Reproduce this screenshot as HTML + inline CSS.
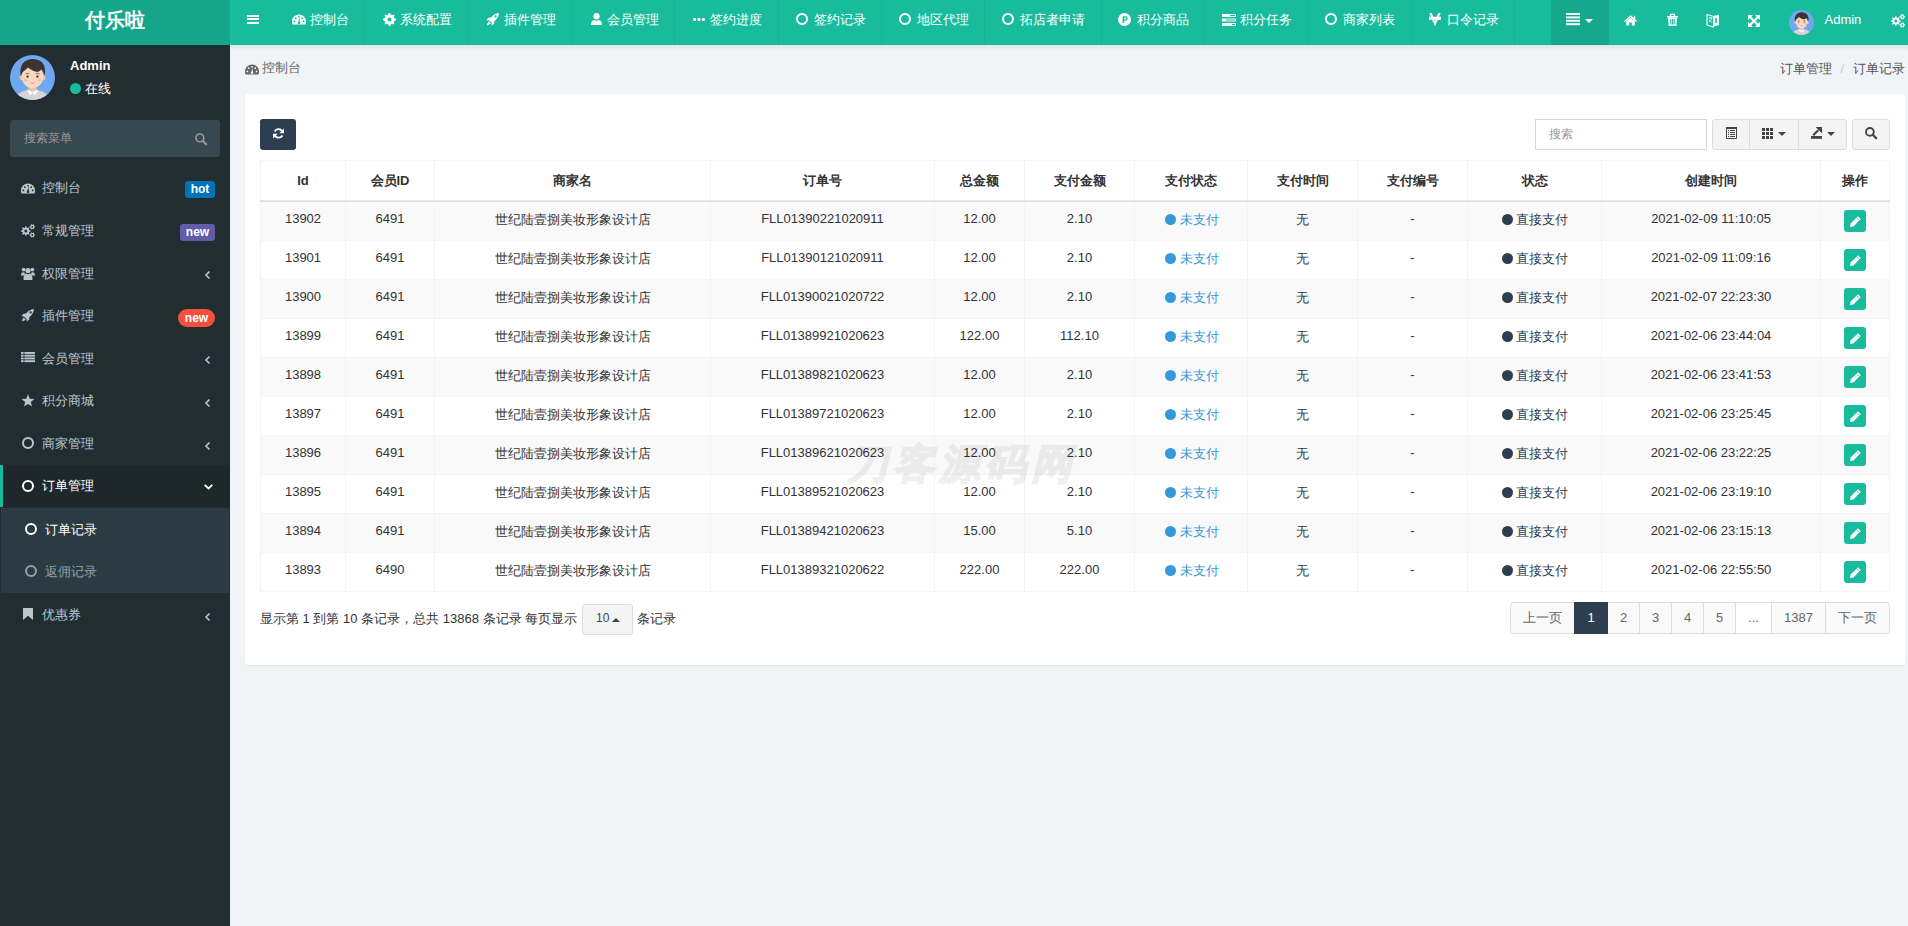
<!DOCTYPE html>
<html><head><meta charset="utf-8">
<style>
*{box-sizing:border-box;margin:0;padding:0}
html,body{width:1908px;height:926px;overflow:hidden;background:#f1f4f6}
body{font-family:"Liberation Sans",sans-serif;font-size:13px;line-height:1.42857143;color:#333;position:relative}
.abs{position:absolute}
.t{white-space:nowrap}
svg{display:block;overflow:visible}
.badge{height:17px;color:#fff;font-weight:bold;font-size:12px;line-height:17px;text-align:center;border-radius:3px}
</style></head><body>
<div class="abs" style="left:0;top:0;width:230px;height:45px;background:#15a589"></div>
<div class="abs t" style="left:0.0px;top:6px;width:230px;text-align:center;line-height:28px;font-size:20px;font-weight:bold;color:#fff">付乐啦</div>
<div class="abs" style="left:230px;top:0;width:1690px;height:45px;background:#18bc9c"></div>
<svg class="abs" style="left:247px;top:15px;" width="12" height="9" viewBox="0 0 12 9"><rect x="0" y="0" width="12" height="2" fill="#fff"/><rect x="0" y="3" width="12" height="2" fill="#fff"/><rect x="0" y="7" width="12" height="2" fill="#fff"/></svg>
<div class="abs" style="left:364px;top:0;width:1px;height:45px;background:rgba(0,0,0,0.05)"></div>
<svg class="abs" style="left:291.6px;top:14.2px;" width="14" height="10.5" viewBox="0 0 14 10.5"><path d="M0.6 10.4 C0 9.5 0 8.5 0 7.4 A7 7 0 0 1 14 7.4 C14 8.5 14 9.5 13.4 10.4 Z" fill="#fff"/><circle cx="2.40" cy="7.40" r="0.9" fill="#18bc9c"/><circle cx="3.75" cy="4.15" r="0.9" fill="#18bc9c"/><circle cx="7.00" cy="2.80" r="0.9" fill="#18bc9c"/><circle cx="10.25" cy="4.15" r="0.9" fill="#18bc9c"/><circle cx="11.60" cy="7.40" r="0.9" fill="#18bc9c"/><path d="M6.3 8.6 L7.4 3.6 L7.9 8.8 Z" fill="#18bc9c"/><circle cx="7" cy="8.7" r="1.3" fill="#18bc9c"/></svg>
<div class="abs t" style="left:310.3px;top:9.5px;line-height:19px;color:#fff">控制台</div>
<div class="abs" style="left:468px;top:0;width:1px;height:45px;background:rgba(0,0,0,0.05)"></div>
<svg class="abs" style="left:383px;top:13px;" width="13" height="13" viewBox="0 0 13 13"><path d="M12.97 5.86 L12.97 7.14 L11.19 7.92 L10.82 8.81 L11.52 10.62 L10.62 11.52 L8.81 10.82 L7.92 11.19 L7.14 12.97 L5.86 12.97 L5.08 11.19 L4.19 10.82 L2.38 11.52 L1.48 10.62 L2.18 8.81 L1.81 7.92 L0.03 7.14 L0.03 5.86 L1.81 5.08 L2.18 4.19 L1.48 2.38 L2.38 1.48 L4.19 2.18 L5.08 1.81 L5.86 0.03 L7.14 0.03 L7.92 1.81 L8.81 2.18 L10.62 1.48 L11.52 2.38 L10.82 4.19 L11.19 5.08Z" fill="#fff"/><circle cx="6.5" cy="6.5" r="2.0" fill="#18bc9c"/></svg>
<div class="abs t" style="left:400.3px;top:9.5px;line-height:19px;color:#fff">系统配置</div>
<div class="abs" style="left:571px;top:0;width:1px;height:45px;background:rgba(0,0,0,0.05)"></div>
<svg class="abs" style="left:486px;top:13px;" width="13" height="13" viewBox="0 0 13 13"><path d="M13 0 C9.5 0.2 7 2 5 4.6 L2.4 4.8 L0.4 7.2 L3 7.4 L5.6 10 L5.8 12.6 L8.2 10.6 L8.4 8 C11 6 12.8 3.5 13 0 Z M2.8 8.6 C1.6 9.6 1.2 11.2 1 12.4 C2.2 12.2 3.8 11.8 4.8 10.6 Z" fill="#fff"/><circle cx="9.6" cy="3.4" r="1.1" fill="#18bc9c"/></svg>
<div class="abs t" style="left:504.3px;top:9.5px;line-height:19px;color:#fff">插件管理</div>
<div class="abs" style="left:674px;top:0;width:1px;height:45px;background:rgba(0,0,0,0.05)"></div>
<svg class="abs" style="left:591px;top:13px;" width="11" height="12" viewBox="0 0 11 12"><ellipse cx="5.5" cy="3.3" rx="3.1" ry="3.3" fill="#fff"/><path d="M0 12 C0 9 1.2 7.3 3 7 C4.4 8 6.6 8 8 7 C9.8 7.3 11 9 11 12 Z" fill="#fff"/></svg>
<div class="abs t" style="left:607.3px;top:9.5px;line-height:19px;color:#fff">会员管理</div>
<div class="abs" style="left:778px;top:0;width:1px;height:45px;background:rgba(0,0,0,0.05)"></div>
<svg class="abs" style="left:693px;top:17.5px;" width="12" height="3" viewBox="0 0 12 3"><rect x="0" y="0" width="3" height="3" rx="1" fill="#fff"/><rect x="4.5" y="0" width="3" height="3" rx="1" fill="#fff"/><rect x="9" y="0" width="3" height="3" rx="1" fill="#fff"/></svg>
<div class="abs t" style="left:710.3px;top:9.5px;line-height:19px;color:#fff">签约进度</div>
<div class="abs" style="left:881px;top:0;width:1px;height:45px;background:rgba(0,0,0,0.05)"></div>
<svg class="abs" style="left:796px;top:13px;" width="12" height="12" viewBox="0 0 12 12"><circle cx="6" cy="6" r="5.0" fill="none" stroke="#fff" stroke-width="2"/></svg>
<div class="abs t" style="left:814.3px;top:9.5px;line-height:19px;color:#fff">签约记录</div>
<div class="abs" style="left:984px;top:0;width:1px;height:45px;background:rgba(0,0,0,0.05)"></div>
<svg class="abs" style="left:899px;top:13px;" width="12" height="12" viewBox="0 0 12 12"><circle cx="6" cy="6" r="5.0" fill="none" stroke="#fff" stroke-width="2"/></svg>
<div class="abs t" style="left:917.3px;top:9.5px;line-height:19px;color:#fff">地区代理</div>
<div class="abs" style="left:1101px;top:0;width:1px;height:45px;background:rgba(0,0,0,0.05)"></div>
<svg class="abs" style="left:1002px;top:13px;" width="12" height="12" viewBox="0 0 12 12"><circle cx="6" cy="6" r="5.0" fill="none" stroke="#fff" stroke-width="2"/></svg>
<div class="abs t" style="left:1020.3px;top:9.5px;line-height:19px;color:#fff">拓店者申请</div>
<div class="abs" style="left:1204px;top:0;width:1px;height:45px;background:rgba(0,0,0,0.05)"></div>
<svg class="abs" style="left:1118px;top:12.5px;" width="13" height="13" viewBox="0 0 13 13"><circle cx="6.5" cy="6.5" r="6.5" fill="#fff"/><path d="M4.6 3.2 H7.4 A2.3 2.3 0 0 1 7.4 7.8 H6.2 V10 H4.6 Z M6.2 4.6 V6.4 H7.3 A0.9 0.9 0 0 0 7.3 4.6 Z" fill="#18bc9c"/></svg>
<div class="abs t" style="left:1137.3px;top:9.5px;line-height:19px;color:#fff">积分商品</div>
<div class="abs" style="left:1307px;top:0;width:1px;height:45px;background:rgba(0,0,0,0.05)"></div>
<svg class="abs" style="left:1222px;top:14px;" width="14" height="12" viewBox="0 0 14 12"><rect x="0" y="0" width="14" height="3" fill="#fff"/><rect x="0" y="4.5" width="14" height="3" fill="#fff"/><rect x="0" y="9" width="14" height="3" fill="#fff"/><rect x="8" y="1" width="5" height="1" fill="#18bc9c"/><rect x="4" y="5.5" width="9" height="1" fill="#18bc9c"/><rect x="10" y="10" width="3" height="1" fill="#18bc9c"/></svg>
<div class="abs t" style="left:1240.3px;top:9.5px;line-height:19px;color:#fff">积分任务</div>
<div class="abs" style="left:1411px;top:0;width:1px;height:45px;background:rgba(0,0,0,0.05)"></div>
<svg class="abs" style="left:1325px;top:13px;" width="12" height="12" viewBox="0 0 12 12"><circle cx="6" cy="6" r="5.0" fill="none" stroke="#fff" stroke-width="2"/></svg>
<div class="abs t" style="left:1343.3px;top:9.5px;line-height:19px;color:#fff">商家列表</div>
<div class="abs" style="left:1514px;top:0;width:1px;height:45px;background:rgba(0,0,0,0.05)"></div>
<svg class="abs" style="left:1429px;top:12.7px;" width="12" height="13.2" viewBox="0 0 12 13.2"><path d="M0.3 0 H2.8 L6 8.6 L9.2 0 H11.7 L6 13.2 Z" fill="#fff"/><rect x="0" y="3.8" width="12" height="3" fill="#fff"/></svg>
<div class="abs t" style="left:1447.3px;top:9.5px;line-height:19px;color:#fff">口令记录</div>
<div class="abs" style="left:1551px;top:0;width:58px;height:45px;background:rgba(0,0,0,0.1)"></div>
<svg class="abs" style="left:1566px;top:13px;" width="14" height="12" viewBox="0 0 14 12"><rect x="0" y="0" width="14" height="2" fill="#fff"/><rect x="0" y="3.4" width="14" height="2" fill="#fff"/><rect x="0" y="6.8" width="14" height="2" fill="#fff"/><rect x="0" y="10.2" width="14" height="2" fill="#fff"/></svg>
<svg class="abs" style="left:1585px;top:19px;" width="8" height="4" viewBox="0 0 8 4"><path d="M0 0 H8 L4.0 4 Z" fill="#fff"/></svg>
<svg class="abs" style="left:1624px;top:14.5px;" width="13" height="10.5" viewBox="0 0 13 10.5"><path d="M6.5 0.3 L13 6 L12 7 L6.5 2.2 L1 7 L0 6 Z" fill="#fff"/><path d="M2.2 6.4 L6.5 2.8 L10.8 6.4 V10.5 H7.8 V7.6 H5.2 V10.5 H2.2 Z" fill="#fff"/><rect x="9.6" y="0.8" width="1.6" height="3.4" fill="#fff"/></svg>
<svg class="abs" style="left:1667px;top:14px;" width="11" height="12" viewBox="0 0 11 12"><rect x="0" y="2" width="11" height="1.6" fill="#fff"/><path d="M3.5 2 V0.3 H7.5 V2" fill="none" stroke="#fff" stroke-width="1.3"/><path d="M1 3.6 H10 L9.4 12 H1.6 Z" fill="#fff"/><rect x="3.2" y="5" width="1" height="5.5" fill="#18bc9c"/><rect x="5" y="5" width="1" height="5.5" fill="#18bc9c"/><rect x="6.8" y="5" width="1" height="5.5" fill="#18bc9c"/></svg>
<svg class="abs" style="left:1707px;top:14px;" width="12" height="13" viewBox="0 0 12 13"><path d="M0 0.5 L6.5 2.5 V13 L0 11 Z" fill="none" stroke="#fff" stroke-width="1.1"/><path d="M6 2.2 L12 0.5 V11 L6 12.8 Z" fill="#fff"/><path d="M8 9 L9 3.8 L10.2 9 M8.4 7.3 H9.8" fill="none" stroke="#18bc9c" stroke-width="0.9"/><path d="M1.5 4 H5 M3.2 3 V4 M2 8 C3.5 7 4.5 5.5 4.6 4 M2.4 5.6 C3 7 4 8 5 8.4" fill="none" stroke="#fff" stroke-width="0.8"/></svg>
<svg class="abs" style="left:1748px;top:14.5px;" width="12" height="12" viewBox="0 0 12 12"><path d="M0 0 H5 L0 5 Z M12 0 V5 L7 0 Z M0 12 V7 L5 12 Z M12 12 H7 L12 7 Z" fill="#fff"/><path d="M1.5 1.5 L10.5 10.5 M10.5 1.5 L1.5 10.5" stroke="#fff" stroke-width="2.2"/></svg>
<svg class="abs" style="left:1789px;top:10px;" width="25" height="25" viewBox="0 0 100 100"><defs><clipPath id="av25"><circle cx="50" cy="50" r="50"/></clipPath></defs>
<g clip-path="url(#av25)"><rect width="100" height="100" fill="#6ea8f0"/>
<path d="M12 100 C14 84 30 77 50 77 C70 77 86 84 88 100 Z" fill="#d9d4cf"/>
<rect x="41" y="62" width="18" height="17" fill="#eec3a6"/>
<path d="M38 76 L50 84 L44 90 Z M62 76 L50 84 L56 90 Z" fill="#ffffff"/>
<ellipse cx="26" cy="50" rx="4.5" ry="6" fill="#f2c8ad"/><ellipse cx="74" cy="50" rx="4.5" ry="6" fill="#f2c8ad"/>
<ellipse cx="50" cy="48" rx="24" ry="26" fill="#f7d8c2"/>
<path d="M24 48 C19 22 33 8 52 9 C70 10 82 22 77 46 C75 40 73 35 70 32 C66 36 62 38 58 37 C50 36 44 31 40 28 C36 33 30 36 27 40 Z" fill="#3b3431"/>
<path d="M34 42 Q38.5 39.5 43 42 M57 42 Q61.5 39.5 66 42" fill="none" stroke="#5a4636" stroke-width="1.6"/>
<ellipse cx="39" cy="48" rx="2.4" ry="2.8" fill="#4a3a30"/><ellipse cx="61" cy="48" rx="2.4" ry="2.8" fill="#4a3a30"/>
<ellipse cx="34" cy="56" rx="4.5" ry="2.6" fill="#f5b9a8"/><ellipse cx="66" cy="56" rx="4.5" ry="2.6" fill="#f5b9a8"/>
<path d="M46 62 Q50 64.5 54 62" fill="none" stroke="#d98a7a" stroke-width="1.8"/></g></svg>
<div class="abs t" style="left:1824.5px;top:10px;line-height:19px;color:#fff;font-size:13px">Admin</div>
<svg class="abs" style="left:1891px;top:14px;" width="14" height="14" viewBox="0 0 14 14"><path d="M9.58 6.53 L9.58 7.47 L8.05 7.99 L7.80 8.60 L8.51 10.05 L7.85 10.71 L6.40 10.00 L5.79 10.25 L5.27 11.78 L4.33 11.78 L3.81 10.25 L3.20 10.00 L1.75 10.71 L1.09 10.05 L1.80 8.60 L1.55 7.99 L0.02 7.47 L0.02 6.53 L1.55 6.01 L1.80 5.40 L1.09 3.95 L1.75 3.29 L3.20 4.00 L3.81 3.75 L4.33 2.22 L5.27 2.22 L5.79 3.75 L6.40 4.00 L7.85 3.29 L8.51 3.95 L7.80 5.40 L8.05 6.01Z" fill="#fff"/><circle cx="4.8" cy="7.0" r="1.5" fill="#18bc9c"/><path d="M14.08 2.43 L14.08 3.17 L13.15 3.57 L12.89 4.02 L13.00 5.02 L12.37 5.39 L11.56 4.78 L11.04 4.78 L10.23 5.39 L9.60 5.02 L9.71 4.02 L9.45 3.57 L8.52 3.17 L8.52 2.43 L9.45 2.03 L9.71 1.58 L9.60 0.58 L10.23 0.21 L11.04 0.82 L11.56 0.82 L12.37 0.21 L13.00 0.58 L12.89 1.58 L13.15 2.03Z" fill="#fff"/><circle cx="11.3" cy="2.8" r="0.9" fill="#18bc9c"/><path d="M14.08 10.63 L14.08 11.37 L13.15 11.77 L12.89 12.22 L13.00 13.22 L12.37 13.59 L11.56 12.98 L11.04 12.98 L10.23 13.59 L9.60 13.22 L9.71 12.22 L9.45 11.77 L8.52 11.37 L8.52 10.63 L9.45 10.23 L9.71 9.78 L9.60 8.78 L10.23 8.41 L11.04 9.02 L11.56 9.02 L12.37 8.41 L13.00 8.78 L12.89 9.78 L13.15 10.23Z" fill="#fff"/><circle cx="11.3" cy="11.0" r="0.9" fill="#18bc9c"/></svg>
<div class="abs" style="left:0;top:45px;width:230px;height:881px;background:#222d32"></div>
<svg class="abs" style="left:10px;top:55px;" width="45" height="45" viewBox="0 0 100 100"><defs><clipPath id="av45"><circle cx="50" cy="50" r="50"/></clipPath></defs>
<g clip-path="url(#av45)"><rect width="100" height="100" fill="#6ea8f0"/>
<path d="M12 100 C14 84 30 77 50 77 C70 77 86 84 88 100 Z" fill="#d9d4cf"/>
<rect x="41" y="62" width="18" height="17" fill="#eec3a6"/>
<path d="M38 76 L50 84 L44 90 Z M62 76 L50 84 L56 90 Z" fill="#ffffff"/>
<ellipse cx="26" cy="50" rx="4.5" ry="6" fill="#f2c8ad"/><ellipse cx="74" cy="50" rx="4.5" ry="6" fill="#f2c8ad"/>
<ellipse cx="50" cy="48" rx="24" ry="26" fill="#f7d8c2"/>
<path d="M24 48 C19 22 33 8 52 9 C70 10 82 22 77 46 C75 40 73 35 70 32 C66 36 62 38 58 37 C50 36 44 31 40 28 C36 33 30 36 27 40 Z" fill="#3b3431"/>
<path d="M34 42 Q38.5 39.5 43 42 M57 42 Q61.5 39.5 66 42" fill="none" stroke="#5a4636" stroke-width="1.6"/>
<ellipse cx="39" cy="48" rx="2.4" ry="2.8" fill="#4a3a30"/><ellipse cx="61" cy="48" rx="2.4" ry="2.8" fill="#4a3a30"/>
<ellipse cx="34" cy="56" rx="4.5" ry="2.6" fill="#f5b9a8"/><ellipse cx="66" cy="56" rx="4.5" ry="2.6" fill="#f5b9a8"/>
<path d="M46 62 Q50 64.5 54 62" fill="none" stroke="#d98a7a" stroke-width="1.8"/></g></svg>
<div class="abs t" style="left:70px;top:56px;line-height:19px;color:#fff;font-size:13px;font-weight:bold">Admin</div>
<svg class="abs" style="left:70px;top:83px;" width="11" height="11" viewBox="0 0 11 11"><circle cx="5.5" cy="5.5" r="5.5" fill="#18bc9c"/></svg>
<div class="abs t" style="left:85px;top:78.5px;line-height:19px;color:#fff">在线</div>
<div class="abs" style="left:10px;top:120px;width:210px;height:37px;background:#374850;border-radius:3px"></div>
<div class="abs t" style="left:24px;top:129px;line-height:19px;color:#999;font-size:12px">搜索菜单</div>
<svg class="abs" style="left:195px;top:133px;" width="12" height="12" viewBox="0 0 12 12"><circle cx="4.9" cy="4.9" r="3.9" fill="none" stroke="#999" stroke-width="1.6"/><path d="M7.7 7.7 L11.2 11.2" stroke="#999" stroke-width="2.0" stroke-linecap="round"/></svg>
<svg class="abs" style="left:21px;top:182.79999999999998px;" width="14" height="10.5" viewBox="0 0 14 10.5"><path d="M0.6 10.4 C0 9.5 0 8.5 0 7.4 A7 7 0 0 1 14 7.4 C14 8.5 14 9.5 13.4 10.4 Z" fill="#b8c7ce"/><circle cx="2.40" cy="7.40" r="0.9" fill="#222d32"/><circle cx="3.75" cy="4.15" r="0.9" fill="#222d32"/><circle cx="7.00" cy="2.80" r="0.9" fill="#222d32"/><circle cx="10.25" cy="4.15" r="0.9" fill="#222d32"/><circle cx="11.60" cy="7.40" r="0.9" fill="#222d32"/><path d="M6.3 8.6 L7.4 3.6 L7.9 8.8 Z" fill="#222d32"/><circle cx="7" cy="8.7" r="1.3" fill="#222d32"/></svg>
<div class="abs t" style="left:42px;top:178.4px;line-height:19px;color:#b8c7ce">控制台</div>
<div class="abs badge" style="left:185px;top:181.00px;width:30px;background:#0073b7">hot</div>
<svg class="abs" style="left:21px;top:224.17px;" width="14" height="14" viewBox="0 0 14 14"><path d="M9.58 6.53 L9.58 7.47 L8.05 7.99 L7.80 8.60 L8.51 10.05 L7.85 10.71 L6.40 10.00 L5.79 10.25 L5.27 11.78 L4.33 11.78 L3.81 10.25 L3.20 10.00 L1.75 10.71 L1.09 10.05 L1.80 8.60 L1.55 7.99 L0.02 7.47 L0.02 6.53 L1.55 6.01 L1.80 5.40 L1.09 3.95 L1.75 3.29 L3.20 4.00 L3.81 3.75 L4.33 2.22 L5.27 2.22 L5.79 3.75 L6.40 4.00 L7.85 3.29 L8.51 3.95 L7.80 5.40 L8.05 6.01Z" fill="#b8c7ce"/><circle cx="4.8" cy="7.0" r="1.5" fill="#222d32"/><path d="M14.08 2.43 L14.08 3.17 L13.15 3.57 L12.89 4.02 L13.00 5.02 L12.37 5.39 L11.56 4.78 L11.04 4.78 L10.23 5.39 L9.60 5.02 L9.71 4.02 L9.45 3.57 L8.52 3.17 L8.52 2.43 L9.45 2.03 L9.71 1.58 L9.60 0.58 L10.23 0.21 L11.04 0.82 L11.56 0.82 L12.37 0.21 L13.00 0.58 L12.89 1.58 L13.15 2.03Z" fill="#b8c7ce"/><circle cx="11.3" cy="2.8" r="0.9" fill="#222d32"/><path d="M14.08 10.63 L14.08 11.37 L13.15 11.77 L12.89 12.22 L13.00 13.22 L12.37 13.59 L11.56 12.98 L11.04 12.98 L10.23 13.59 L9.60 13.22 L9.71 12.22 L9.45 11.77 L8.52 11.37 L8.52 10.63 L9.45 10.23 L9.71 9.78 L9.60 8.78 L10.23 8.41 L11.04 9.02 L11.56 9.02 L12.37 8.41 L13.00 8.78 L12.89 9.78 L13.15 10.23Z" fill="#b8c7ce"/><circle cx="11.3" cy="11.0" r="0.9" fill="#222d32"/></svg>
<div class="abs t" style="left:42px;top:220.97px;line-height:19px;color:#b8c7ce">常规管理</div>
<div class="abs badge" style="left:180px;top:223.57px;width:35px;background:#605ca8">new</div>
<svg class="abs" style="left:21px;top:266.74px;" width="14" height="13" viewBox="0 0 14 13"><circle cx="2.6" cy="2.6" r="1.9" fill="#b8c7ce"/><circle cx="11.4" cy="2.6" r="1.9" fill="#b8c7ce"/><circle cx="7" cy="3.5" r="2.6" fill="#b8c7ce"/><path d="M0 8.5 C0 6 1 5.2 2.4 5.2 C3 5.2 3.6 5.6 4 6 L3 8.5 Z M14 8.5 C14 6 13 5.2 11.6 5.2 C11 5.2 10.4 5.6 10 6 L11 8.5 Z" fill="#b8c7ce"/><path d="M2.6 13 V10.5 C2.6 8 4 6.8 5 6.6 C6.2 7.4 7.8 7.4 9 6.6 C10 6.8 11.4 8 11.4 10.5 V13 Z" fill="#b8c7ce"/></svg>
<div class="abs t" style="left:42px;top:263.54px;line-height:19px;color:#b8c7ce">权限管理</div>
<svg class="abs" style="left:205px;top:271.24px;" width="6" height="8" viewBox="0 0 6 8"><path d="M4.5 0.5 L1 4 L4.5 7.5" fill="none" stroke="#b8c7ce" stroke-width="1.6"/></svg>
<svg class="abs" style="left:21px;top:309.31px;" width="13" height="13" viewBox="0 0 13 13"><path d="M13 0 C9.5 0.2 7 2 5 4.6 L2.4 4.8 L0.4 7.2 L3 7.4 L5.6 10 L5.8 12.6 L8.2 10.6 L8.4 8 C11 6 12.8 3.5 13 0 Z M2.8 8.6 C1.6 9.6 1.2 11.2 1 12.4 C2.2 12.2 3.8 11.8 4.8 10.6 Z" fill="#b8c7ce"/><circle cx="9.6" cy="3.4" r="1.1" fill="#222d32"/></svg>
<div class="abs t" style="left:42px;top:306.11px;line-height:19px;color:#b8c7ce">插件管理</div>
<div class="abs badge" style="left:178px;top:308.91px;width:37px;height:18px;line-height:18px;background:#f5503f;border-radius:9px">new</div>
<svg class="abs" style="left:21px;top:352.08px;" width="14" height="10.2" viewBox="0 0 14 10.2"><rect x="0" y="0" width="2.6" height="1.9" fill="#b8c7ce"/><rect x="3.4" y="0" width="10.6" height="1.9" fill="#b8c7ce"/><rect x="0" y="2.75" width="2.6" height="1.9" fill="#b8c7ce"/><rect x="3.4" y="2.75" width="10.6" height="1.9" fill="#b8c7ce"/><rect x="0" y="5.5" width="2.6" height="1.9" fill="#b8c7ce"/><rect x="3.4" y="5.5" width="10.6" height="1.9" fill="#b8c7ce"/><rect x="0" y="8.25" width="2.6" height="1.9" fill="#b8c7ce"/><rect x="3.4" y="8.25" width="10.6" height="1.9" fill="#b8c7ce"/></svg>
<div class="abs t" style="left:42px;top:348.68px;line-height:19px;color:#b8c7ce">会员管理</div>
<svg class="abs" style="left:205px;top:356.38px;" width="6" height="8" viewBox="0 0 6 8"><path d="M4.5 0.5 L1 4 L4.5 7.5" fill="none" stroke="#b8c7ce" stroke-width="1.6"/></svg>
<svg class="abs" style="left:21px;top:393.95px;" width="14" height="14" viewBox="0 0 14 14"><path d="M7.00 0.20 L8.70 4.65 L13.47 4.90 L9.76 7.90 L11.00 12.50 L7.00 9.90 L3.00 12.50 L4.24 7.90 L0.53 4.90 L5.30 4.65Z" fill="#b8c7ce"/></svg>
<div class="abs t" style="left:42px;top:391.25px;line-height:19px;color:#b8c7ce">积分商城</div>
<svg class="abs" style="left:205px;top:398.95px;" width="6" height="8" viewBox="0 0 6 8"><path d="M4.5 0.5 L1 4 L4.5 7.5" fill="none" stroke="#b8c7ce" stroke-width="1.6"/></svg>
<svg class="abs" style="left:22px;top:437.02px;" width="12" height="12" viewBox="0 0 12 12"><circle cx="6" cy="6" r="5.0" fill="none" stroke="#b8c7ce" stroke-width="2"/></svg>
<div class="abs t" style="left:42px;top:433.82px;line-height:19px;color:#b8c7ce">商家管理</div>
<svg class="abs" style="left:205px;top:441.52px;" width="6" height="8" viewBox="0 0 6 8"><path d="M4.5 0.5 L1 4 L4.5 7.5" fill="none" stroke="#b8c7ce" stroke-width="1.6"/></svg>
<div class="abs" style="left:0;top:464.59px;width:230px;height:42.57px;background:#1e282c"></div>
<div class="abs" style="left:0;top:464.59px;width:3px;height:42.57px;background:#18bc9c"></div>
<svg class="abs" style="left:22px;top:479.59000000000003px;" width="12" height="12" viewBox="0 0 12 12"><circle cx="6" cy="6" r="5.0" fill="none" stroke="#fff" stroke-width="2"/></svg>
<div class="abs t" style="left:42px;top:476.39000000000004px;line-height:19px;color:#fff">订单管理</div>
<svg class="abs" style="left:203.5px;top:484.09000000000003px;" width="9" height="5.5" viewBox="0 0 9 5.5"><path d="M0.7 0.8 L4.5 4.4 L8.3 0.8" fill="none" stroke="#fff" stroke-width="1.8"/></svg>
<div class="abs" style="left:1px;top:508.00px;width:228px;height:85px;background:#2c3b41"></div>
<svg class="abs" style="left:25px;top:522.6px;" width="12" height="12" viewBox="0 0 12 12"><circle cx="6" cy="6" r="5.0" fill="none" stroke="#fff" stroke-width="2"/></svg>
<div class="abs t" style="left:45px;top:519.8px;line-height:19px;color:#fff">订单记录</div>
<svg class="abs" style="left:25px;top:565.1700000000001px;" width="12" height="12" viewBox="0 0 12 12"><circle cx="6" cy="6" r="5.0" fill="none" stroke="#8aa4af" stroke-width="2"/></svg>
<div class="abs t" style="left:45px;top:562.37px;line-height:19px;color:#8aa4af">返佣记录</div>
<svg class="abs" style="left:23px;top:608px;" width="10" height="12" viewBox="0 0 10 12"><path d="M0 0 H10 V12 L5 7.8 L0 12 Z" fill="#b8c7ce"/></svg>
<div class="abs t" style="left:42px;top:604.8px;line-height:19px;color:#b8c7ce">优惠券</div>
<svg class="abs" style="left:205px;top:612.5px;" width="6" height="8" viewBox="0 0 6 8"><path d="M4.5 0.5 L1 4 L4.5 7.5" fill="none" stroke="#b8c7ce" stroke-width="1.6"/></svg>
<div class="abs" style="left:230px;top:45px;width:1690px;height:6px;background:linear-gradient(rgba(0,0,0,0.06),rgba(0,0,0,0))"></div>
<svg class="abs" style="left:245px;top:64px;" width="14" height="10.5" viewBox="0 0 14 10.5"><path d="M0.6 10.4 C0 9.5 0 8.5 0 7.4 A7 7 0 0 1 14 7.4 C14 8.5 14 9.5 13.4 10.4 Z" fill="#666"/><circle cx="2.40" cy="7.40" r="0.9" fill="#f1f4f6"/><circle cx="3.75" cy="4.15" r="0.9" fill="#f1f4f6"/><circle cx="7.00" cy="2.80" r="0.9" fill="#f1f4f6"/><circle cx="10.25" cy="4.15" r="0.9" fill="#f1f4f6"/><circle cx="11.60" cy="7.40" r="0.9" fill="#f1f4f6"/><path d="M6.3 8.6 L7.4 3.6 L7.9 8.8 Z" fill="#f1f4f6"/><circle cx="7" cy="8.7" r="1.3" fill="#f1f4f6"/></svg>
<div class="abs t" style="left:261.5px;top:58px;line-height:19px;color:#666">控制台</div>
<div class="abs t" style="left:1780px;top:58.5px;line-height:19px;color:#555">订单管理</div>
<div class="abs t" style="left:1840.5px;top:58.5px;line-height:19px;color:#ccc">/</div>
<div class="abs t" style="left:1853px;top:58.5px;line-height:19px;color:#555">订单记录</div>
<div class="abs" style="left:245px;top:94px;width:1660px;height:571px;background:#fff;border-radius:3px;box-shadow:0 1px 1px rgba(0,0,0,0.06)"></div>
<div class="abs" style="left:260px;top:119px;width:36px;height:31px;background:#2c3e50;border-radius:3px"></div>
<svg class="abs" style="left:273px;top:128.3px;" width="11" height="10.5" viewBox="0 0 11.6 11"><path d="M10.2 4.2 A4.8 4.8 0 0 0 1.6 3.6" fill="none" stroke="#fff" stroke-width="1.9"/><path d="M11.6 0.4 V5.4 H6.6 Z" fill="#fff"/><path d="M1.4 7.0 A4.8 4.8 0 0 0 10 7.8" fill="none" stroke="#fff" stroke-width="1.9"/><path d="M0 11 V6 H5 Z" fill="#fff"/></svg>
<div class="abs" style="left:1535px;top:119px;width:172px;height:31px;border:1px solid #d2d6de;background:#fff"></div>
<div class="abs t" style="left:1548.5px;top:124.5px;line-height:19px;color:#999;font-size:12px">搜索</div>
<div class="abs" style="left:1712px;top:119px;width:135px;height:31px;border:1px solid #ddd;background:#f4f4f4;border-radius:3px"></div>
<div class="abs" style="left:1749px;top:119px;width:1px;height:31px;background:#ddd"></div>
<div class="abs" style="left:1798px;top:119px;width:1px;height:31px;background:#ddd"></div>
<svg class="abs" style="left:1726px;top:127px;" width="11" height="12" viewBox="0 0 11 12"><path d="M0.5 0.5 H10.5 V11.5 H0.5 Z" fill="none" stroke="#444" stroke-width="1"/><rect x="0" y="0" width="11" height="2" fill="#444"/><rect x="2" y="3" width="1" height="1" fill="#444"/><rect x="4" y="3" width="5" height="1" fill="#444"/><rect x="2" y="5" width="1" height="1" fill="#444"/><rect x="4" y="5" width="5" height="1" fill="#444"/><rect x="2" y="7" width="1" height="1" fill="#444"/><rect x="4" y="7" width="5" height="1" fill="#444"/><rect x="2" y="9" width="1" height="1" fill="#444"/><rect x="4" y="9" width="5" height="1" fill="#444"/></svg>
<svg class="abs" style="left:1762px;top:128px;" width="11" height="11" viewBox="0 0 11 11"><rect x="0" y="0" width="3" height="3" fill="#444"/><rect x="0" y="4" width="3" height="3" fill="#444"/><rect x="0" y="8" width="3" height="3" fill="#444"/><rect x="4" y="0" width="3" height="3" fill="#444"/><rect x="4" y="4" width="3" height="3" fill="#444"/><rect x="4" y="8" width="3" height="3" fill="#444"/><rect x="8" y="0" width="3" height="3" fill="#444"/><rect x="8" y="4" width="3" height="3" fill="#444"/><rect x="8" y="8" width="3" height="3" fill="#444"/></svg>
<svg class="abs" style="left:1778px;top:132px;" width="8" height="4" viewBox="0 0 8 4"><path d="M0 0 H8 L4.0 4 Z" fill="#444"/></svg>
<svg class="abs" style="left:1811px;top:127px;" width="11" height="12" viewBox="0 0 11 12"><rect x="0" y="9" width="11" height="2.8" fill="#444"/><path d="M2.2 8.2 L7.2 3.2" stroke="#444" stroke-width="2.2"/><path d="M4.6 0 H11 V6.4 Z" fill="#444"/></svg>
<svg class="abs" style="left:1826.5px;top:132px;" width="8" height="4" viewBox="0 0 8 4"><path d="M0 0 H8 L4.0 4 Z" fill="#444"/></svg>
<div class="abs" style="left:1852px;top:119px;width:38px;height:31px;border:1px solid #ddd;background:#f4f4f4;border-radius:3px"></div>
<svg class="abs" style="left:1865px;top:127px;" width="13" height="13" viewBox="0 0 13 13"><circle cx="4.9" cy="4.9" r="3.9" fill="none" stroke="#444" stroke-width="1.9"/><path d="M7.7 7.7 L11.2 11.2" stroke="#444" stroke-width="2.3" stroke-linecap="round"/></svg>
<div class="abs" style="left:261px;top:202px;width:1628px;height:38px;background:#f9f9f9"></div>
<div class="abs" style="left:260px;top:240px;width:1630px;height:1px;background:#f4f4f4"></div>
<div class="abs" style="left:261px;top:241px;width:1628px;height:38px;background:#fff"></div>
<div class="abs" style="left:260px;top:279px;width:1630px;height:1px;background:#f4f4f4"></div>
<div class="abs" style="left:261px;top:280px;width:1628px;height:38px;background:#f9f9f9"></div>
<div class="abs" style="left:260px;top:318px;width:1630px;height:1px;background:#f4f4f4"></div>
<div class="abs" style="left:261px;top:319px;width:1628px;height:38px;background:#fff"></div>
<div class="abs" style="left:260px;top:357px;width:1630px;height:1px;background:#f4f4f4"></div>
<div class="abs" style="left:261px;top:358px;width:1628px;height:38px;background:#f9f9f9"></div>
<div class="abs" style="left:260px;top:396px;width:1630px;height:1px;background:#f4f4f4"></div>
<div class="abs" style="left:261px;top:397px;width:1628px;height:38px;background:#fff"></div>
<div class="abs" style="left:260px;top:435px;width:1630px;height:1px;background:#f4f4f4"></div>
<div class="abs" style="left:261px;top:436px;width:1628px;height:38px;background:#f9f9f9"></div>
<div class="abs" style="left:260px;top:474px;width:1630px;height:1px;background:#f4f4f4"></div>
<div class="abs" style="left:261px;top:475px;width:1628px;height:38px;background:#fff"></div>
<div class="abs" style="left:260px;top:513px;width:1630px;height:1px;background:#f4f4f4"></div>
<div class="abs" style="left:261px;top:514px;width:1628px;height:38px;background:#f9f9f9"></div>
<div class="abs" style="left:260px;top:552px;width:1630px;height:1px;background:#f4f4f4"></div>
<div class="abs" style="left:261px;top:553px;width:1628px;height:38px;background:#fff"></div>
<div class="abs" style="left:260px;top:591px;width:1630px;height:1px;background:#f4f4f4"></div>
<div class="abs" style="left:260px;top:160px;width:1630px;height:1px;background:#f4f4f4"></div>
<div class="abs" style="left:260px;top:200px;width:1630px;height:1px;background:#e8e8e8"></div>
<div class="abs" style="left:260px;top:201px;width:1630px;height:1px;background:#ddd"></div>
<div class="abs" style="left:260px;top:591px;width:1630px;height:1px;background:#f4f4f4"></div>
<div class="abs" style="left:260px;top:160px;width:1px;height:40px;background:#f4f4f4"></div>
<div class="abs" style="left:260px;top:202px;width:1px;height:390px;background:#f4f4f4"></div>
<div class="abs" style="left:345px;top:160px;width:1px;height:40px;background:#f4f4f4"></div>
<div class="abs" style="left:345px;top:202px;width:1px;height:390px;background:#f4f4f4"></div>
<div class="abs" style="left:434px;top:160px;width:1px;height:40px;background:#f4f4f4"></div>
<div class="abs" style="left:434px;top:202px;width:1px;height:390px;background:#f4f4f4"></div>
<div class="abs" style="left:710px;top:160px;width:1px;height:40px;background:#f4f4f4"></div>
<div class="abs" style="left:710px;top:202px;width:1px;height:390px;background:#f4f4f4"></div>
<div class="abs" style="left:934px;top:160px;width:1px;height:40px;background:#f4f4f4"></div>
<div class="abs" style="left:934px;top:202px;width:1px;height:390px;background:#f4f4f4"></div>
<div class="abs" style="left:1024px;top:160px;width:1px;height:40px;background:#f4f4f4"></div>
<div class="abs" style="left:1024px;top:202px;width:1px;height:390px;background:#f4f4f4"></div>
<div class="abs" style="left:1134px;top:160px;width:1px;height:40px;background:#f4f4f4"></div>
<div class="abs" style="left:1134px;top:202px;width:1px;height:390px;background:#f4f4f4"></div>
<div class="abs" style="left:1247px;top:160px;width:1px;height:40px;background:#f4f4f4"></div>
<div class="abs" style="left:1247px;top:202px;width:1px;height:390px;background:#f4f4f4"></div>
<div class="abs" style="left:1357px;top:160px;width:1px;height:40px;background:#f4f4f4"></div>
<div class="abs" style="left:1357px;top:202px;width:1px;height:390px;background:#f4f4f4"></div>
<div class="abs" style="left:1467px;top:160px;width:1px;height:40px;background:#f4f4f4"></div>
<div class="abs" style="left:1467px;top:202px;width:1px;height:390px;background:#f4f4f4"></div>
<div class="abs" style="left:1601px;top:160px;width:1px;height:40px;background:#f4f4f4"></div>
<div class="abs" style="left:1601px;top:202px;width:1px;height:390px;background:#f4f4f4"></div>
<div class="abs" style="left:1820px;top:160px;width:1px;height:40px;background:#f4f4f4"></div>
<div class="abs" style="left:1820px;top:202px;width:1px;height:390px;background:#f4f4f4"></div>
<div class="abs" style="left:1889px;top:160px;width:1px;height:40px;background:#f4f4f4"></div>
<div class="abs" style="left:1889px;top:202px;width:1px;height:390px;background:#f4f4f4"></div>
<div class="abs t" style="left:103.0px;top:171px;width:400px;text-align:center;line-height:19px;font-weight:bold;color:#333">Id</div>
<div class="abs t" style="left:190.0px;top:171px;width:400px;text-align:center;line-height:19px;font-weight:bold;color:#333">会员ID</div>
<div class="abs t" style="left:372.5px;top:171px;width:400px;text-align:center;line-height:19px;font-weight:bold;color:#333">商家名</div>
<div class="abs t" style="left:622.5px;top:171px;width:400px;text-align:center;line-height:19px;font-weight:bold;color:#333">订单号</div>
<div class="abs t" style="left:779.5px;top:171px;width:400px;text-align:center;line-height:19px;font-weight:bold;color:#333">总金额</div>
<div class="abs t" style="left:879.5px;top:171px;width:400px;text-align:center;line-height:19px;font-weight:bold;color:#333">支付金额</div>
<div class="abs t" style="left:991.0px;top:171px;width:400px;text-align:center;line-height:19px;font-weight:bold;color:#333">支付状态</div>
<div class="abs t" style="left:1102.5px;top:171px;width:400px;text-align:center;line-height:19px;font-weight:bold;color:#333">支付时间</div>
<div class="abs t" style="left:1212.5px;top:171px;width:400px;text-align:center;line-height:19px;font-weight:bold;color:#333">支付编号</div>
<div class="abs t" style="left:1334.5px;top:171px;width:400px;text-align:center;line-height:19px;font-weight:bold;color:#333">状态</div>
<div class="abs t" style="left:1511.0px;top:171px;width:400px;text-align:center;line-height:19px;font-weight:bold;color:#333">创建时间</div>
<div class="abs t" style="left:1655.0px;top:171px;width:400px;text-align:center;line-height:19px;font-weight:bold;color:#333">操作</div>
<div class="abs t" style="left:103.0px;top:209px;width:400px;text-align:center;line-height:19px;">13902</div>
<div class="abs t" style="left:190.0px;top:209px;width:400px;text-align:center;line-height:19px;">6491</div>
<div class="abs t" style="left:372.5px;top:210px;width:400px;text-align:center;line-height:19px;">世纪陆壹捌美妆形象设计店</div>
<div class="abs t" style="left:622.5px;top:209px;width:400px;text-align:center;line-height:19px;">FLL01390221020911</div>
<div class="abs t" style="left:779.5px;top:209px;width:400px;text-align:center;line-height:19px;">12.00</div>
<div class="abs t" style="left:879.5px;top:209px;width:400px;text-align:center;line-height:19px;">2.10</div>
<svg class="abs" style="left:1165px;top:214px;" width="11" height="11" viewBox="0 0 11 11"><circle cx="5.5" cy="5.5" r="5.5" fill="#3498db"/></svg>
<div class="abs t" style="left:1179.5px;top:210px;line-height:19px;color:#3498db">未支付</div>
<div class="abs t" style="left:1102.5px;top:210px;width:400px;text-align:center;line-height:19px;">无</div>
<div class="abs t" style="left:1212.5px;top:209px;width:400px;text-align:center;line-height:19px;">-</div>
<svg class="abs" style="left:1501.5px;top:214px;" width="11" height="11" viewBox="0 0 11 11"><circle cx="5.5" cy="5.5" r="5.5" fill="#2c3e50"/></svg>
<div class="abs t" style="left:1516px;top:210px;line-height:19px;color:#2c3e50">直接支付</div>
<div class="abs t" style="left:1511.0px;top:209px;width:400px;text-align:center;line-height:19px;">2021-02-09 11:10:05</div>
<div class="abs" style="left:1844px;top:210px;width:22px;height:22px;background:#18bc9c;border-radius:3px"></div>
<svg class="abs" style="left:1849.5px;top:215.5px;" width="11" height="11" viewBox="0 0 11 11"><path d="M8 0.2 L10.8 3 L3.4 10.4 L0 11 L0.6 7.6 Z" fill="#fff"/><path d="M6.6 1.6 L9.4 4.4" stroke="#18bc9c" stroke-width="0.7"/><path d="M1.6 8.6 L7.6 2.6" stroke="#a8e6d9" stroke-width="0.5"/></svg>
<div class="abs t" style="left:103.0px;top:248px;width:400px;text-align:center;line-height:19px;">13901</div>
<div class="abs t" style="left:190.0px;top:248px;width:400px;text-align:center;line-height:19px;">6491</div>
<div class="abs t" style="left:372.5px;top:249px;width:400px;text-align:center;line-height:19px;">世纪陆壹捌美妆形象设计店</div>
<div class="abs t" style="left:622.5px;top:248px;width:400px;text-align:center;line-height:19px;">FLL01390121020911</div>
<div class="abs t" style="left:779.5px;top:248px;width:400px;text-align:center;line-height:19px;">12.00</div>
<div class="abs t" style="left:879.5px;top:248px;width:400px;text-align:center;line-height:19px;">2.10</div>
<svg class="abs" style="left:1165px;top:253px;" width="11" height="11" viewBox="0 0 11 11"><circle cx="5.5" cy="5.5" r="5.5" fill="#3498db"/></svg>
<div class="abs t" style="left:1179.5px;top:249px;line-height:19px;color:#3498db">未支付</div>
<div class="abs t" style="left:1102.5px;top:249px;width:400px;text-align:center;line-height:19px;">无</div>
<div class="abs t" style="left:1212.5px;top:248px;width:400px;text-align:center;line-height:19px;">-</div>
<svg class="abs" style="left:1501.5px;top:253px;" width="11" height="11" viewBox="0 0 11 11"><circle cx="5.5" cy="5.5" r="5.5" fill="#2c3e50"/></svg>
<div class="abs t" style="left:1516px;top:249px;line-height:19px;color:#2c3e50">直接支付</div>
<div class="abs t" style="left:1511.0px;top:248px;width:400px;text-align:center;line-height:19px;">2021-02-09 11:09:16</div>
<div class="abs" style="left:1844px;top:249px;width:22px;height:22px;background:#18bc9c;border-radius:3px"></div>
<svg class="abs" style="left:1849.5px;top:254.5px;" width="11" height="11" viewBox="0 0 11 11"><path d="M8 0.2 L10.8 3 L3.4 10.4 L0 11 L0.6 7.6 Z" fill="#fff"/><path d="M6.6 1.6 L9.4 4.4" stroke="#18bc9c" stroke-width="0.7"/><path d="M1.6 8.6 L7.6 2.6" stroke="#a8e6d9" stroke-width="0.5"/></svg>
<div class="abs t" style="left:103.0px;top:287px;width:400px;text-align:center;line-height:19px;">13900</div>
<div class="abs t" style="left:190.0px;top:287px;width:400px;text-align:center;line-height:19px;">6491</div>
<div class="abs t" style="left:372.5px;top:288px;width:400px;text-align:center;line-height:19px;">世纪陆壹捌美妆形象设计店</div>
<div class="abs t" style="left:622.5px;top:287px;width:400px;text-align:center;line-height:19px;">FLL01390021020722</div>
<div class="abs t" style="left:779.5px;top:287px;width:400px;text-align:center;line-height:19px;">12.00</div>
<div class="abs t" style="left:879.5px;top:287px;width:400px;text-align:center;line-height:19px;">2.10</div>
<svg class="abs" style="left:1165px;top:292px;" width="11" height="11" viewBox="0 0 11 11"><circle cx="5.5" cy="5.5" r="5.5" fill="#3498db"/></svg>
<div class="abs t" style="left:1179.5px;top:288px;line-height:19px;color:#3498db">未支付</div>
<div class="abs t" style="left:1102.5px;top:288px;width:400px;text-align:center;line-height:19px;">无</div>
<div class="abs t" style="left:1212.5px;top:287px;width:400px;text-align:center;line-height:19px;">-</div>
<svg class="abs" style="left:1501.5px;top:292px;" width="11" height="11" viewBox="0 0 11 11"><circle cx="5.5" cy="5.5" r="5.5" fill="#2c3e50"/></svg>
<div class="abs t" style="left:1516px;top:288px;line-height:19px;color:#2c3e50">直接支付</div>
<div class="abs t" style="left:1511.0px;top:287px;width:400px;text-align:center;line-height:19px;">2021-02-07 22:23:30</div>
<div class="abs" style="left:1844px;top:288px;width:22px;height:22px;background:#18bc9c;border-radius:3px"></div>
<svg class="abs" style="left:1849.5px;top:293.5px;" width="11" height="11" viewBox="0 0 11 11"><path d="M8 0.2 L10.8 3 L3.4 10.4 L0 11 L0.6 7.6 Z" fill="#fff"/><path d="M6.6 1.6 L9.4 4.4" stroke="#18bc9c" stroke-width="0.7"/><path d="M1.6 8.6 L7.6 2.6" stroke="#a8e6d9" stroke-width="0.5"/></svg>
<div class="abs t" style="left:103.0px;top:326px;width:400px;text-align:center;line-height:19px;">13899</div>
<div class="abs t" style="left:190.0px;top:326px;width:400px;text-align:center;line-height:19px;">6491</div>
<div class="abs t" style="left:372.5px;top:327px;width:400px;text-align:center;line-height:19px;">世纪陆壹捌美妆形象设计店</div>
<div class="abs t" style="left:622.5px;top:326px;width:400px;text-align:center;line-height:19px;">FLL01389921020623</div>
<div class="abs t" style="left:779.5px;top:326px;width:400px;text-align:center;line-height:19px;">122.00</div>
<div class="abs t" style="left:879.5px;top:326px;width:400px;text-align:center;line-height:19px;">112.10</div>
<svg class="abs" style="left:1165px;top:331px;" width="11" height="11" viewBox="0 0 11 11"><circle cx="5.5" cy="5.5" r="5.5" fill="#3498db"/></svg>
<div class="abs t" style="left:1179.5px;top:327px;line-height:19px;color:#3498db">未支付</div>
<div class="abs t" style="left:1102.5px;top:327px;width:400px;text-align:center;line-height:19px;">无</div>
<div class="abs t" style="left:1212.5px;top:326px;width:400px;text-align:center;line-height:19px;">-</div>
<svg class="abs" style="left:1501.5px;top:331px;" width="11" height="11" viewBox="0 0 11 11"><circle cx="5.5" cy="5.5" r="5.5" fill="#2c3e50"/></svg>
<div class="abs t" style="left:1516px;top:327px;line-height:19px;color:#2c3e50">直接支付</div>
<div class="abs t" style="left:1511.0px;top:326px;width:400px;text-align:center;line-height:19px;">2021-02-06 23:44:04</div>
<div class="abs" style="left:1844px;top:327px;width:22px;height:22px;background:#18bc9c;border-radius:3px"></div>
<svg class="abs" style="left:1849.5px;top:332.5px;" width="11" height="11" viewBox="0 0 11 11"><path d="M8 0.2 L10.8 3 L3.4 10.4 L0 11 L0.6 7.6 Z" fill="#fff"/><path d="M6.6 1.6 L9.4 4.4" stroke="#18bc9c" stroke-width="0.7"/><path d="M1.6 8.6 L7.6 2.6" stroke="#a8e6d9" stroke-width="0.5"/></svg>
<div class="abs t" style="left:103.0px;top:365px;width:400px;text-align:center;line-height:19px;">13898</div>
<div class="abs t" style="left:190.0px;top:365px;width:400px;text-align:center;line-height:19px;">6491</div>
<div class="abs t" style="left:372.5px;top:366px;width:400px;text-align:center;line-height:19px;">世纪陆壹捌美妆形象设计店</div>
<div class="abs t" style="left:622.5px;top:365px;width:400px;text-align:center;line-height:19px;">FLL01389821020623</div>
<div class="abs t" style="left:779.5px;top:365px;width:400px;text-align:center;line-height:19px;">12.00</div>
<div class="abs t" style="left:879.5px;top:365px;width:400px;text-align:center;line-height:19px;">2.10</div>
<svg class="abs" style="left:1165px;top:370px;" width="11" height="11" viewBox="0 0 11 11"><circle cx="5.5" cy="5.5" r="5.5" fill="#3498db"/></svg>
<div class="abs t" style="left:1179.5px;top:366px;line-height:19px;color:#3498db">未支付</div>
<div class="abs t" style="left:1102.5px;top:366px;width:400px;text-align:center;line-height:19px;">无</div>
<div class="abs t" style="left:1212.5px;top:365px;width:400px;text-align:center;line-height:19px;">-</div>
<svg class="abs" style="left:1501.5px;top:370px;" width="11" height="11" viewBox="0 0 11 11"><circle cx="5.5" cy="5.5" r="5.5" fill="#2c3e50"/></svg>
<div class="abs t" style="left:1516px;top:366px;line-height:19px;color:#2c3e50">直接支付</div>
<div class="abs t" style="left:1511.0px;top:365px;width:400px;text-align:center;line-height:19px;">2021-02-06 23:41:53</div>
<div class="abs" style="left:1844px;top:366px;width:22px;height:22px;background:#18bc9c;border-radius:3px"></div>
<svg class="abs" style="left:1849.5px;top:371.5px;" width="11" height="11" viewBox="0 0 11 11"><path d="M8 0.2 L10.8 3 L3.4 10.4 L0 11 L0.6 7.6 Z" fill="#fff"/><path d="M6.6 1.6 L9.4 4.4" stroke="#18bc9c" stroke-width="0.7"/><path d="M1.6 8.6 L7.6 2.6" stroke="#a8e6d9" stroke-width="0.5"/></svg>
<div class="abs t" style="left:103.0px;top:404px;width:400px;text-align:center;line-height:19px;">13897</div>
<div class="abs t" style="left:190.0px;top:404px;width:400px;text-align:center;line-height:19px;">6491</div>
<div class="abs t" style="left:372.5px;top:405px;width:400px;text-align:center;line-height:19px;">世纪陆壹捌美妆形象设计店</div>
<div class="abs t" style="left:622.5px;top:404px;width:400px;text-align:center;line-height:19px;">FLL01389721020623</div>
<div class="abs t" style="left:779.5px;top:404px;width:400px;text-align:center;line-height:19px;">12.00</div>
<div class="abs t" style="left:879.5px;top:404px;width:400px;text-align:center;line-height:19px;">2.10</div>
<svg class="abs" style="left:1165px;top:409px;" width="11" height="11" viewBox="0 0 11 11"><circle cx="5.5" cy="5.5" r="5.5" fill="#3498db"/></svg>
<div class="abs t" style="left:1179.5px;top:405px;line-height:19px;color:#3498db">未支付</div>
<div class="abs t" style="left:1102.5px;top:405px;width:400px;text-align:center;line-height:19px;">无</div>
<div class="abs t" style="left:1212.5px;top:404px;width:400px;text-align:center;line-height:19px;">-</div>
<svg class="abs" style="left:1501.5px;top:409px;" width="11" height="11" viewBox="0 0 11 11"><circle cx="5.5" cy="5.5" r="5.5" fill="#2c3e50"/></svg>
<div class="abs t" style="left:1516px;top:405px;line-height:19px;color:#2c3e50">直接支付</div>
<div class="abs t" style="left:1511.0px;top:404px;width:400px;text-align:center;line-height:19px;">2021-02-06 23:25:45</div>
<div class="abs" style="left:1844px;top:405px;width:22px;height:22px;background:#18bc9c;border-radius:3px"></div>
<svg class="abs" style="left:1849.5px;top:410.5px;" width="11" height="11" viewBox="0 0 11 11"><path d="M8 0.2 L10.8 3 L3.4 10.4 L0 11 L0.6 7.6 Z" fill="#fff"/><path d="M6.6 1.6 L9.4 4.4" stroke="#18bc9c" stroke-width="0.7"/><path d="M1.6 8.6 L7.6 2.6" stroke="#a8e6d9" stroke-width="0.5"/></svg>
<div class="abs t" style="left:103.0px;top:443px;width:400px;text-align:center;line-height:19px;">13896</div>
<div class="abs t" style="left:190.0px;top:443px;width:400px;text-align:center;line-height:19px;">6491</div>
<div class="abs t" style="left:372.5px;top:444px;width:400px;text-align:center;line-height:19px;">世纪陆壹捌美妆形象设计店</div>
<div class="abs t" style="left:622.5px;top:443px;width:400px;text-align:center;line-height:19px;">FLL01389621020623</div>
<div class="abs t" style="left:779.5px;top:443px;width:400px;text-align:center;line-height:19px;">12.00</div>
<div class="abs t" style="left:879.5px;top:443px;width:400px;text-align:center;line-height:19px;">2.10</div>
<svg class="abs" style="left:1165px;top:448px;" width="11" height="11" viewBox="0 0 11 11"><circle cx="5.5" cy="5.5" r="5.5" fill="#3498db"/></svg>
<div class="abs t" style="left:1179.5px;top:444px;line-height:19px;color:#3498db">未支付</div>
<div class="abs t" style="left:1102.5px;top:444px;width:400px;text-align:center;line-height:19px;">无</div>
<div class="abs t" style="left:1212.5px;top:443px;width:400px;text-align:center;line-height:19px;">-</div>
<svg class="abs" style="left:1501.5px;top:448px;" width="11" height="11" viewBox="0 0 11 11"><circle cx="5.5" cy="5.5" r="5.5" fill="#2c3e50"/></svg>
<div class="abs t" style="left:1516px;top:444px;line-height:19px;color:#2c3e50">直接支付</div>
<div class="abs t" style="left:1511.0px;top:443px;width:400px;text-align:center;line-height:19px;">2021-02-06 23:22:25</div>
<div class="abs" style="left:1844px;top:444px;width:22px;height:22px;background:#18bc9c;border-radius:3px"></div>
<svg class="abs" style="left:1849.5px;top:449.5px;" width="11" height="11" viewBox="0 0 11 11"><path d="M8 0.2 L10.8 3 L3.4 10.4 L0 11 L0.6 7.6 Z" fill="#fff"/><path d="M6.6 1.6 L9.4 4.4" stroke="#18bc9c" stroke-width="0.7"/><path d="M1.6 8.6 L7.6 2.6" stroke="#a8e6d9" stroke-width="0.5"/></svg>
<div class="abs t" style="left:103.0px;top:482px;width:400px;text-align:center;line-height:19px;">13895</div>
<div class="abs t" style="left:190.0px;top:482px;width:400px;text-align:center;line-height:19px;">6491</div>
<div class="abs t" style="left:372.5px;top:483px;width:400px;text-align:center;line-height:19px;">世纪陆壹捌美妆形象设计店</div>
<div class="abs t" style="left:622.5px;top:482px;width:400px;text-align:center;line-height:19px;">FLL01389521020623</div>
<div class="abs t" style="left:779.5px;top:482px;width:400px;text-align:center;line-height:19px;">12.00</div>
<div class="abs t" style="left:879.5px;top:482px;width:400px;text-align:center;line-height:19px;">2.10</div>
<svg class="abs" style="left:1165px;top:487px;" width="11" height="11" viewBox="0 0 11 11"><circle cx="5.5" cy="5.5" r="5.5" fill="#3498db"/></svg>
<div class="abs t" style="left:1179.5px;top:483px;line-height:19px;color:#3498db">未支付</div>
<div class="abs t" style="left:1102.5px;top:483px;width:400px;text-align:center;line-height:19px;">无</div>
<div class="abs t" style="left:1212.5px;top:482px;width:400px;text-align:center;line-height:19px;">-</div>
<svg class="abs" style="left:1501.5px;top:487px;" width="11" height="11" viewBox="0 0 11 11"><circle cx="5.5" cy="5.5" r="5.5" fill="#2c3e50"/></svg>
<div class="abs t" style="left:1516px;top:483px;line-height:19px;color:#2c3e50">直接支付</div>
<div class="abs t" style="left:1511.0px;top:482px;width:400px;text-align:center;line-height:19px;">2021-02-06 23:19:10</div>
<div class="abs" style="left:1844px;top:483px;width:22px;height:22px;background:#18bc9c;border-radius:3px"></div>
<svg class="abs" style="left:1849.5px;top:488.5px;" width="11" height="11" viewBox="0 0 11 11"><path d="M8 0.2 L10.8 3 L3.4 10.4 L0 11 L0.6 7.6 Z" fill="#fff"/><path d="M6.6 1.6 L9.4 4.4" stroke="#18bc9c" stroke-width="0.7"/><path d="M1.6 8.6 L7.6 2.6" stroke="#a8e6d9" stroke-width="0.5"/></svg>
<div class="abs t" style="left:103.0px;top:521px;width:400px;text-align:center;line-height:19px;">13894</div>
<div class="abs t" style="left:190.0px;top:521px;width:400px;text-align:center;line-height:19px;">6491</div>
<div class="abs t" style="left:372.5px;top:522px;width:400px;text-align:center;line-height:19px;">世纪陆壹捌美妆形象设计店</div>
<div class="abs t" style="left:622.5px;top:521px;width:400px;text-align:center;line-height:19px;">FLL01389421020623</div>
<div class="abs t" style="left:779.5px;top:521px;width:400px;text-align:center;line-height:19px;">15.00</div>
<div class="abs t" style="left:879.5px;top:521px;width:400px;text-align:center;line-height:19px;">5.10</div>
<svg class="abs" style="left:1165px;top:526px;" width="11" height="11" viewBox="0 0 11 11"><circle cx="5.5" cy="5.5" r="5.5" fill="#3498db"/></svg>
<div class="abs t" style="left:1179.5px;top:522px;line-height:19px;color:#3498db">未支付</div>
<div class="abs t" style="left:1102.5px;top:522px;width:400px;text-align:center;line-height:19px;">无</div>
<div class="abs t" style="left:1212.5px;top:521px;width:400px;text-align:center;line-height:19px;">-</div>
<svg class="abs" style="left:1501.5px;top:526px;" width="11" height="11" viewBox="0 0 11 11"><circle cx="5.5" cy="5.5" r="5.5" fill="#2c3e50"/></svg>
<div class="abs t" style="left:1516px;top:522px;line-height:19px;color:#2c3e50">直接支付</div>
<div class="abs t" style="left:1511.0px;top:521px;width:400px;text-align:center;line-height:19px;">2021-02-06 23:15:13</div>
<div class="abs" style="left:1844px;top:522px;width:22px;height:22px;background:#18bc9c;border-radius:3px"></div>
<svg class="abs" style="left:1849.5px;top:527.5px;" width="11" height="11" viewBox="0 0 11 11"><path d="M8 0.2 L10.8 3 L3.4 10.4 L0 11 L0.6 7.6 Z" fill="#fff"/><path d="M6.6 1.6 L9.4 4.4" stroke="#18bc9c" stroke-width="0.7"/><path d="M1.6 8.6 L7.6 2.6" stroke="#a8e6d9" stroke-width="0.5"/></svg>
<div class="abs t" style="left:103.0px;top:560px;width:400px;text-align:center;line-height:19px;">13893</div>
<div class="abs t" style="left:190.0px;top:560px;width:400px;text-align:center;line-height:19px;">6490</div>
<div class="abs t" style="left:372.5px;top:561px;width:400px;text-align:center;line-height:19px;">世纪陆壹捌美妆形象设计店</div>
<div class="abs t" style="left:622.5px;top:560px;width:400px;text-align:center;line-height:19px;">FLL01389321020622</div>
<div class="abs t" style="left:779.5px;top:560px;width:400px;text-align:center;line-height:19px;">222.00</div>
<div class="abs t" style="left:879.5px;top:560px;width:400px;text-align:center;line-height:19px;">222.00</div>
<svg class="abs" style="left:1165px;top:565px;" width="11" height="11" viewBox="0 0 11 11"><circle cx="5.5" cy="5.5" r="5.5" fill="#3498db"/></svg>
<div class="abs t" style="left:1179.5px;top:561px;line-height:19px;color:#3498db">未支付</div>
<div class="abs t" style="left:1102.5px;top:561px;width:400px;text-align:center;line-height:19px;">无</div>
<div class="abs t" style="left:1212.5px;top:560px;width:400px;text-align:center;line-height:19px;">-</div>
<svg class="abs" style="left:1501.5px;top:565px;" width="11" height="11" viewBox="0 0 11 11"><circle cx="5.5" cy="5.5" r="5.5" fill="#2c3e50"/></svg>
<div class="abs t" style="left:1516px;top:561px;line-height:19px;color:#2c3e50">直接支付</div>
<div class="abs t" style="left:1511.0px;top:560px;width:400px;text-align:center;line-height:19px;">2021-02-06 22:55:50</div>
<div class="abs" style="left:1844px;top:561px;width:22px;height:22px;background:#18bc9c;border-radius:3px"></div>
<svg class="abs" style="left:1849.5px;top:566.5px;" width="11" height="11" viewBox="0 0 11 11"><path d="M8 0.2 L10.8 3 L3.4 10.4 L0 11 L0.6 7.6 Z" fill="#fff"/><path d="M6.6 1.6 L9.4 4.4" stroke="#18bc9c" stroke-width="0.7"/><path d="M1.6 8.6 L7.6 2.6" stroke="#a8e6d9" stroke-width="0.5"/></svg>
<div class="abs t" style="left:260px;top:608.5px;line-height:19px;color:#333">显示第 1 到第 10 条记录，总共 13868 条记录 每页显示</div>
<div class="abs" style="left:582px;top:604px;width:51px;height:31px;border:1px solid #ddd;background:#f4f4f4;border-radius:3px"></div>
<div class="abs t" style="left:596px;top:609px;line-height:19px;color:#444;font-size:12px">10</div>
<svg class="abs" style="left:612px;top:618px;" width="8" height="4" viewBox="0 0 8 4"><path d="M0 4 H8 L4.0 0 Z" fill="#444"/></svg>
<div class="abs t" style="left:637px;top:608.5px;line-height:19px;color:#333">条记录</div>
<div class="abs" style="left:1510px;top:602px;width:380px;height:32px;border:1px solid #ddd;background:#fafafa;border-radius:4px"></div>
<div class="abs t" style="left:1342.5px;top:607.5px;width:400px;text-align:center;line-height:19px;color:#666">上一页</div>
<div class="abs" style="left:1574px;top:602px;width:34px;height:32px;background:#2c3e50"></div>
<div class="abs t" style="left:1391.0px;top:607.5px;width:400px;text-align:center;line-height:19px;color:#fff">1</div>
<div class="abs t" style="left:1423.5px;top:607.5px;width:400px;text-align:center;line-height:19px;color:#666">2</div>
<div class="abs" style="left:1639px;top:602px;width:1px;height:32px;background:#ddd"></div>
<div class="abs t" style="left:1455.5px;top:607.5px;width:400px;text-align:center;line-height:19px;color:#666">3</div>
<div class="abs" style="left:1671px;top:602px;width:1px;height:32px;background:#ddd"></div>
<div class="abs t" style="left:1487.5px;top:607.5px;width:400px;text-align:center;line-height:19px;color:#666">4</div>
<div class="abs" style="left:1703px;top:602px;width:1px;height:32px;background:#ddd"></div>
<div class="abs t" style="left:1519.5px;top:607.5px;width:400px;text-align:center;line-height:19px;color:#666">5</div>
<div class="abs" style="left:1735px;top:603px;width:36px;height:30px;background:#fff"></div>
<div class="abs" style="left:1735px;top:602px;width:1px;height:32px;background:#ddd"></div>
<div class="abs t" style="left:1553.5px;top:607.5px;width:400px;text-align:center;line-height:19px;color:#666">...</div>
<div class="abs" style="left:1771px;top:602px;width:1px;height:32px;background:#ddd"></div>
<div class="abs t" style="left:1598.5px;top:607.5px;width:400px;text-align:center;line-height:19px;color:#666">1387</div>
<div class="abs" style="left:1825px;top:602px;width:1px;height:32px;background:#ddd"></div>
<div class="abs t" style="left:1657.5px;top:607.5px;width:400px;text-align:center;line-height:19px;color:#666">下一页</div>
<div class="abs t" style="left:847px;top:436px;font-size:41px;line-height:56px;font-weight:bold;font-style:italic;color:#000;-webkit-text-stroke:1.6px #000;opacity:0.055;letter-spacing:5px">刀客源码网</div>
</body></html>
